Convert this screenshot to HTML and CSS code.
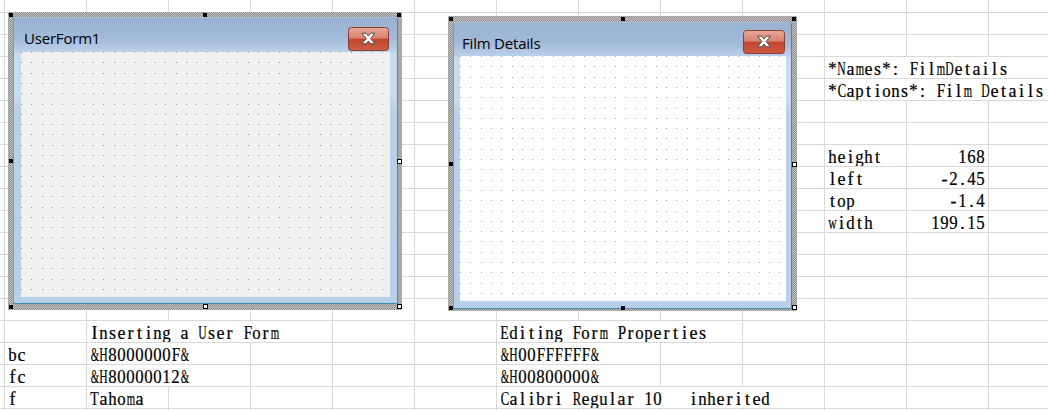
FILE: index.html
```html
<!DOCTYPE html>
<html>
<head>
<meta charset="utf-8">
<title>User Form</title>
<link rel="stylesheet" href="styles.css">
</head>
<body>
<div class="canvas">
  <div class="sheet">
    <div class="cell r4 col-J3">*Names*: FilmDetails</div>
    <div class="cell r5 col-J3">*Captions*: Film Details</div>
    <div class="cell r8 col-J">height</div>
    <div class="cell num r8 col-K">168</div>
    <div class="cell r9 col-J">left</div>
    <div class="cell num r9 col-K">-2.45</div>
    <div class="cell r10 col-J">top</div>
    <div class="cell num r10 col-K">-1.4</div>
    <div class="cell r11 col-J">width</div>
    <div class="cell num r11 col-K">199.15</div>

    <div class="cell r16 col-B3">Inserting a User Form</div>
    <div class="cell r16 col-G3">Editing Form Properties</div>
    <div class="cell r17 col-A">bc</div>
    <div class="cell r17 col-B2">&amp;H8000000F&amp;</div>
    <div class="cell r17 col-G2">&amp;H00FFFFFF&amp;</div>
    <div class="cell r18 col-A">fc</div>
    <div class="cell r18 col-B2">&amp;H80000012&amp;</div>
    <div class="cell r18 col-G2">&amp;H00800000&amp;</div>
    <div class="cell r19 col-A">f</div>
    <div class="cell r19 col-B">Tahoma</div>
    <div class="cell r19 col-G4">Calibri Regular 10   inherited</div>
  </div>

  <div class="form form-left">
    <div class="window">
      <div class="titlebar">
        <span class="title">UserForm1</span>
        <svg class="close" width="41" height="24" viewBox="0 0 41 24">
          <defs>
            <linearGradient id="cgl" x1="0" y1="0" x2="0" y2="1">
              <stop offset="0" stop-color="#eaa99b"/>
              <stop offset="0.47" stop-color="#d9806f"/>
              <stop offset="0.5" stop-color="#c2442d"/>
              <stop offset="1" stop-color="#cd5b41"/>
            </linearGradient>
          </defs>
          <rect x="0.5" y="0.5" width="40" height="23" rx="3" fill="url(#cgl)" stroke="#8a3e35"/>
          <polygon points="13.9,6.2 18.1,6.2 20.4,8.97 22.7,6.2 26.9,6.2 22.5,11.5 26.9,16.8 22.7,16.8 20.4,14.03 18.1,16.8 13.9,16.8 18.3,11.5" fill="#fff" stroke="#4d4d4d" stroke-width="1"/>
        </svg>
      </div>
      <div class="client client-gray">
        <svg class="dots" width="100%" height="100%"></svg>
      </div>
    </div>
    <span class="handle tl"></span>
    <span class="handle tc"></span>
    <span class="handle tr"></span>
    <span class="handle ml"></span>
    <span class="handle open mr"></span>
    <span class="handle bl"></span>
    <span class="handle open bc"></span>
    <span class="handle open br"></span>
  </div>

  <div class="form form-right">
    <div class="window">
      <div class="titlebar">
        <span class="title">Film Details</span>
        <svg class="close" width="42" height="24" viewBox="0 0 42 24">
          <defs>
            <linearGradient id="cgr" x1="0" y1="0" x2="0" y2="1">
              <stop offset="0" stop-color="#eaa99b"/>
              <stop offset="0.47" stop-color="#d9806f"/>
              <stop offset="0.5" stop-color="#c2442d"/>
              <stop offset="1" stop-color="#cd5b41"/>
            </linearGradient>
          </defs>
          <rect x="0.5" y="0.5" width="41" height="23" rx="3" fill="url(#cgr)" stroke="#8a3e35"/>
          <polygon points="14.5,6.2 18.7,6.2 21,8.97 23.3,6.2 27.5,6.2 23.1,11.5 27.5,16.8 23.3,16.8 21,14.03 18.7,16.8 14.5,16.8 18.9,11.5" fill="#fff" stroke="#4d4d4d" stroke-width="1"/>
        </svg>
      </div>
      <div class="client client-white">
        <svg class="dots" width="100%" height="100%"></svg>
      </div>
    </div>
    <span class="handle tl"></span>
    <span class="handle tc"></span>
    <span class="handle tr"></span>
    <span class="handle ml"></span>
    <span class="handle open mr"></span>
    <span class="handle bl"></span>
    <span class="handle bc"></span>
    <span class="handle open br"></span>
  </div>
</div>
<script src="script.js"></script>
</body>
</html>
```

FILE: styles.css
```css
html, body {
  margin: 0;
  padding: 0;
  background: #fff;
}

body {
  width: 1048px;
  height: 410px;
  overflow: hidden;
}

.canvas {
  position: relative;
  width: 1048px;
  height: 410px;
  overflow: hidden;
}

/* spreadsheet grid */
.sheet {
  display: grid;
  grid-template-columns: 5px repeat(13, 82px);
  grid-template-rows: 13px repeat(19, 22px);
  width: 1071px;
  height: 431px;
  background-color: #fff;
  background-image:
    linear-gradient(to right, #d9d9d9 1px, transparent 1px),
    linear-gradient(to bottom, #d9d9d9 1px, transparent 1px);
  background-size: 82px 100%, 100% 22px;
  background-position: 4px 0, 0 12px;
}

.cell {
  box-sizing: border-box;
  display: flex;
  align-items: flex-end;
  padding-left: 3px;
  padding-bottom: 1px;
  background: #fff;
  border-right: 1px solid #d9d9d9;
  border-bottom: 1px solid #d9d9d9;
  font-family: "Liberation Serif", "DejaVu Serif", serif;
  font-size: 18px;
  line-height: 16px;
  color: #000;
  -webkit-text-stroke: 0.2px #000;
  white-space: pre;
  overflow: hidden;
}

.cell.num {
  justify-content: flex-end;
  padding-left: 0;
  padding-right: 3px;
}

/* one fixed-width box per character, like a half-width CJK font */
.line {
  display: flex;
  align-items: baseline;
  flex: none;
}

.ch {
  display: flex;
  justify-content: center;
  width: 9px;
  flex: none;
}

.g {
  display: block;
  flex: none;
  white-space: pre;
}

.r4 { grid-row: 4; }
.r5 { grid-row: 5; }
.r8 { grid-row: 8; }
.r9 { grid-row: 9; }
.r10 { grid-row: 10; }
.r11 { grid-row: 11; }
.r16 { grid-row: 16; }
.r17 { grid-row: 17; }
.r18 { grid-row: 18; }
.r19 { grid-row: 19; }

.col-A { grid-column: 2 / span 1; }
.col-B { grid-column: 3 / span 1; }
.col-B2 { grid-column: 3 / span 2; }
.col-B3 { grid-column: 3 / span 3; }
.col-G2 { grid-column: 8 / span 2; }
.col-G3 { grid-column: 8 / span 3; }
.col-G4 { grid-column: 8 / span 4; }
.col-J { grid-column: 12 / span 1; }
.col-J3 { grid-column: 12 / span 3; }
.col-K { grid-column: 13 / span 1; }

/* user forms lying over the sheet */
.form {
  position: absolute;
  box-sizing: border-box;
  display: flex;
  background: repeating-conic-gradient(#8c8c8c 0 25%, #c6c6c6 0 50%) 0 0 / 2px 2px;
}

.form-left {
  left: 8px;
  top: 12px;
  width: 394px;
  height: 298px;
  padding: 5px 4px 6px 5px;
}

.form-right {
  left: 448px;
  top: 16px;
  width: 349px;
  height: 295px;
  padding: 6px 5px 2px 5px;
}

.window {
  flex: 1;
  display: flex;
  flex-direction: column;
  border: 1px solid;
  border-color: #a9bdd6 #3f8fa4 #3f8fa4 #8497ad;
  border-radius: 4px 4px 0 0;
  background: linear-gradient(180deg,
    #9ab3d2 0,
    #a2bad8 20px,
    #bbd0e9 33px,
    #c8dbef 36px,
    #c8dbef 78px,
    #b9d0e9 92px,
    #b8cfe9 100%);
}

.form-left .window { padding: 0 7px 6px 7px; }
.form-right .window { padding: 0 5px 7px 6px; }

.titlebar {
  display: flex;
  justify-content: space-between;
  align-items: flex-end;
  flex: none;
  box-sizing: border-box;
}

.form-left .titlebar { height: 34px; padding: 0 1px 1px 3px; }
.form-right .titlebar { height: 33px; padding: 0 1px 2px 2px; }

.title {
  font-family: "Open Sans", "Noto Sans", sans-serif;
  font-size: 15px;
  letter-spacing: -0.2px;
  line-height: 16px;
  color: #000;
  white-space: nowrap;
}

.form-left .title { margin-bottom: 5px; }
.form-right .title { margin-bottom: 3px; }

.close {
  display: block;
  flex: none;
}

.client {
  flex: 1;
  overflow: hidden;
}

.client-gray { background: #f0f0f0; }
.client-white { background: #fff; }

.dots {
  display: block;
  shape-rendering: crispEdges;
}

.client-gray .dots path { fill: #8e8e8e; }
.client-white .dots path { fill: #9c9ce2; }

/* selection handles */
.handle {
  position: absolute;
  box-sizing: border-box;
  width: 4px;
  height: 4px;
  background: #000;
}

.handle.open {
  width: 5px;
  height: 5px;
  background: #fff;
  border: 1px solid #000;
}

.tl { left: 1px; top: 1px; }
.tc { left: calc(50% - 2px); top: 1px; }
.tr { right: 1px; top: 1px; }
.ml { left: 1px; top: calc(50% - 2px); }
.mr { right: 0; top: calc(50% - 2px); }
.bl { left: 1px; bottom: 1px; }
.bc { left: calc(50% - 2px); bottom: 1px; }
.br { right: 0; bottom: 1px; }
```

FILE: script.js
```js
(function () {
  var MAX = 8.4;
  var cells = document.querySelectorAll('.cell');
  cells.forEach(function (cell) {
    var text = cell.textContent;
    cell.textContent = '';
    var line = document.createElement('span');
    line.className = 'line';
    Array.from(text).forEach(function (ch) {
      var box = document.createElement('span');
      box.className = 'ch';
      var g = document.createElement('span');
      g.className = 'g';
      g.textContent = ch === ' ' ? '\u00a0' : ch;
      box.appendChild(g);
      line.appendChild(box);
    });
    cell.appendChild(line);
  });
  document.querySelectorAll('.g').forEach(function (g) {
    var w = g.getBoundingClientRect().width;
    if (w > MAX) {
      g.style.transform = 'scaleX(' + (MAX / w).toFixed(3) + ')';
    }
  });

  /* design-grid dots of the user forms */
  var STEP = 10.3;
  document.querySelectorAll('.dots').forEach(function (svg) {
    var r = svg.getBoundingClientRect();
    var d = '';
    for (var j = 0; j * STEP < r.height; j++) {
      for (var i = 0; i * STEP < r.width; i++) {
        d += 'M' + Math.round(i * STEP) + ' ' + Math.round(j * STEP) + 'h1v1h-1z';
      }
    }
    var p = document.createElementNS('http://www.w3.org/2000/svg', 'path');
    p.setAttribute('d', d);
    svg.appendChild(p);
  });
})();
```
